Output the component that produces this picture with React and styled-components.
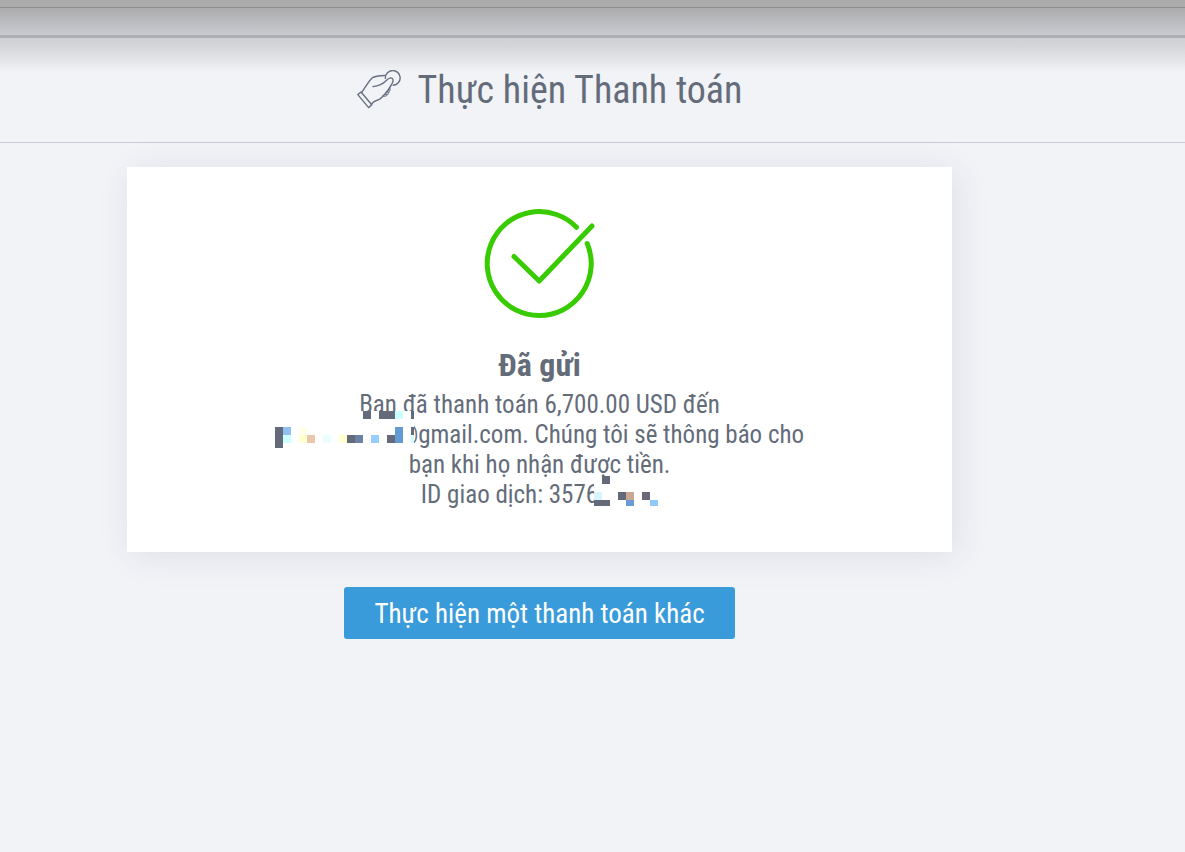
import React from "react";
import styled, { createGlobalStyle } from "styled-components";

const GlobalStyle = createGlobalStyle`
  * { box-sizing: border-box; }
  body {
    margin: 0;
    background: #f1f3f7;
    color: #646c7a;
    font-family: "Roboto Condensed", "Liberation Sans Narrow", Roboto, sans-serif;
  }
`;

const Page = styled.div`
  min-height: 100vh;
  background: #f1f3f7;
`;

const TopEdge = styled.div`
  height: 8px;
  background: linear-gradient(#aaaaaa, #acacad);
  border-bottom: 1px solid #8c8c8f;
`;

const TopBar = styled.div`
  height: 30px;
  background: linear-gradient(#acacae, #c9cacf);
  background-clip: padding-box;
  border-bottom: 3px solid #aeafb3;
`;

const Header = styled.header`
  display: flex;
  align-items: center;
  justify-content: center;
  gap: 16px;
  height: 105px;
  padding-right: 86px;
  border-bottom: 1px solid #c8cad9;
  background: linear-gradient(#cfd0d3 0, #d5d6d9 9px, #e6e7eb 24px, #f1f3f7 34px);
`;

const Title = styled.h1`
  margin: 0;
  font-size: 38px;
  line-height: 48px;
  font-weight: 400;
`;

const Main = styled.main`
  display: flex;
  flex-direction: column;
  align-items: center;
  gap: 35px;
  padding: 24px 106px 48px 0;
`;

const Card = styled.section`
  display: flex;
  flex-direction: column;
  align-items: center;
  width: 100%;
  max-width: 825px;
  padding: 40px 24px 42px;
  background: #ffffff;
  box-shadow: 4px 4px 32px rgba(60, 60, 80, 0.1);
  text-align: center;
`;

const Status = styled.h2`
  margin: 25px 0 6px;
  font-size: 32px;
  line-height: 38px;
  font-weight: 700;
`;

const Message = styled.p`
  margin: 0;
  font-size: 25px;
  line-height: 30px;
`;

const Hidden = styled.span`
  position: relative;
  display: inline-block;
  width: ${(p) => p.$width}px;
  height: 20px;
  vertical-align: baseline;
`;

const Mosaic = styled.svg`
  position: absolute;
  ${(p) => p.$side}: 0;
  bottom: ${(p) => p.$drop}px;
  shape-rendering: crispEdges;
`;

const Action = styled.button`
  height: 52px;
  padding: 2px 30px 0;
  border: 0;
  border-radius: 3px;
  background: #3a9bdb;
  color: #ffffff;
  font-family: inherit;
  font-size: 27px;
  line-height: 32px;
  cursor: pointer;
`;

const D = "#646a7a";

const emailBlocks = [
  [88, 0, 8, 8, D], [104, 0, 16, 8, D], [120, 0, 8, 8, "#ccffff"], [136, 0, 3, 8, D],
  [0, 16, 8, 21, D], [8, 16, 8, 8, "#90c0f2"], [8, 24, 8, 8, "#ccffff"],
  [24, 16, 8, 8, "#fffee8"], [24, 24, 8, 8, "#ffffd0"], [32, 24, 8, 8, "#e9c6ad"],
  [48, 24, 8, 8, "#eaffff"], [64, 24, 8, 8, "#ffffd0"], [72, 24, 8, 8, D],
  [80, 24, 8, 8, "#6a82a5"], [96, 24, 8, 8, "#96ceff"], [112, 24, 8, 8, D],
  [120, 16, 8, 16, "#629ad2"], [136, 16, 3, 8, D], [136, 24, 3, 8, "#ccffff"],
];

const idBlocks = [
  [8, 0, 8, 8, D], [0, 16, 8, 8, "#d8f4ff"], [0, 24, 16, 6, D],
  [24, 16, 8, 8, D], [32, 16, 8, 8, "#c9a793"], [32, 24, 8, 6, "#6a9bd8"],
  [48, 16, 8, 8, "#6c6879"], [56, 24, 8, 6, "#90c8fa"],
];

function Blocks({ data }) {
  return data.map(([x, y, w, h, fill], i) => (
    <rect key={i} x={x} y={y} width={w} height={h} fill={fill} />
  ));
}

function HandCoin() {
  return (
    <svg width="45" height="40" viewBox="0 0 45 40" fill="none" stroke="#697080" strokeWidth="1.4" strokeLinejoin="round" strokeLinecap="round" aria-hidden="true">
      <path d="M.8 24.600 4 22 14.800 34.800 11.600 37.600Z" />
      <path d="M4.600 22.500C8.500 17 11.500 11.500 15 8 18 5.800 23 5.600 28 5.500" />
      <path d="M16 16.600C21 15.900 25.500 14.300 28.500 11.200 31 8.600 33.500 7.200 35.200 8.300 36.700 9.500 36 12 34.600 14.500 32.500 17.500 31.500 20 29 22.600 25.500 27.500 23 29.700 19.500 30.500 17 31.200 15.500 32.500 14.300 34.300" />
      <path d="M28.400 8.400A7.400 7.400 0 1 1 36.200 15.300" />
      <path d="M32.800 17.200C33.500 19 33 20.300 30.300 21.300M33 19.500C33.400 21.600 31.500 22.800 28.800 23M32 22.300C32 24 30 25 27 24.700M30.800 24.600C29.800 26.400 27.500 26.600 25.200 26.100" strokeWidth="1" />
    </svg>
  );
}

function SuccessMark() {
  return (
    <svg width="114" height="114" viewBox="1 0 114 114" fill="none" stroke="#38cc00" strokeWidth="5" strokeLinecap="round" strokeLinejoin="round" aria-hidden="true">
      <path d="M94.500 20.300A52 52 0 1 0 105.200 36.500" />
      <path d="M32 49.500 57.200 74 110 19" />
    </svg>
  );
}

export default function App() {
  return (
    <Page>
      <GlobalStyle />
      <TopEdge />
      <TopBar />
      <Header>
        <HandCoin />
        <Title>Thực hiện Thanh toán</Title>
      </Header>
      <Main>
        <Card>
          <SuccessMark />
          <Status>Đã gửi</Status>
          <Message>
            Bạn đã thanh toán 6,700.00 USD đến
            <br />
            <Hidden $width={124} aria-hidden="true">
              <Mosaic $side="left" $drop={-5} width="139" height="37">
                <rect x="80" width="59" height="37" fill="#ffffff" />
                <Blocks data={emailBlocks} />
              </Mosaic>
            </Hidden>
            @gmail.com. Chúng tôi sẽ thông báo cho
            <br />
            bạn khi họ nhận được tiền.
            <br />
            ID giao dịch: 3576
            <Hidden $width={60} aria-hidden="true">
              <Mosaic $side="right" $drop={-3} width="64" height="30">
                <rect y="8" width="64" height="22" fill="#ffffff" />
                <Blocks data={idBlocks} />
              </Mosaic>
            </Hidden>
          </Message>
        </Card>
        <Action type="button">Thực hiện một thanh toán khác</Action>
      </Main>
    </Page>
  );
}
